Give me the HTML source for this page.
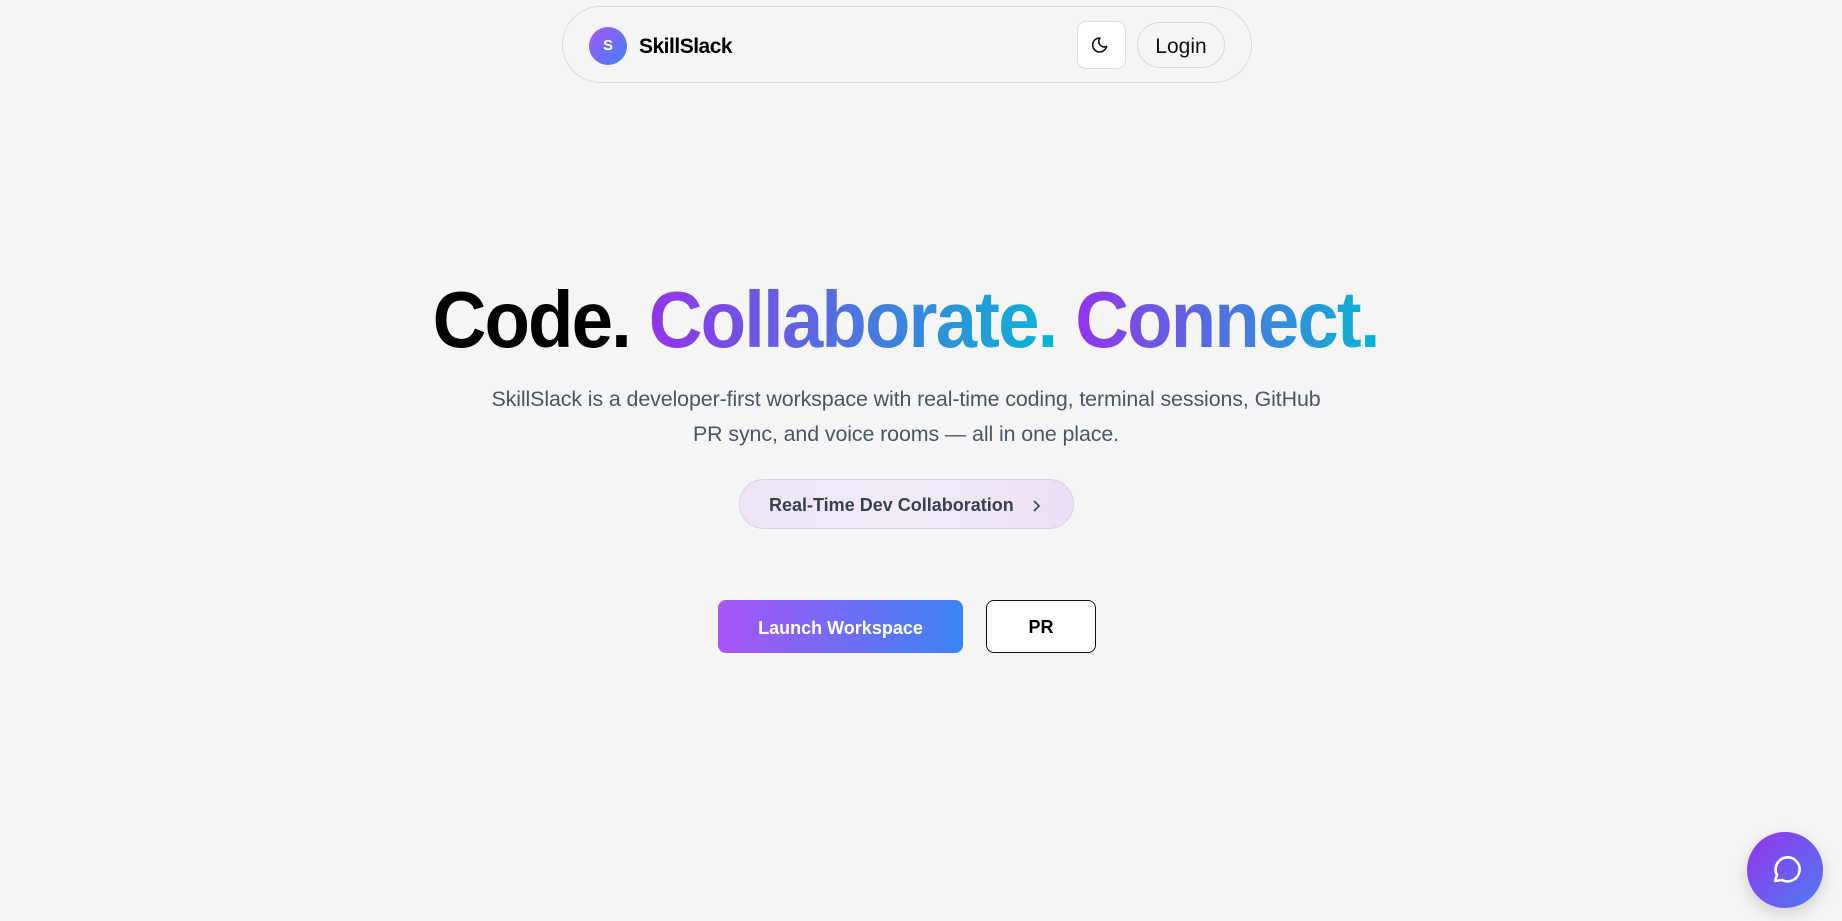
<!DOCTYPE html>
<html><head><meta charset="utf-8"><style>
*{box-sizing:border-box;margin:0;padding:0}
html,body{width:1842px;height:921px;overflow:hidden;background:#f5f5f5;font-family:"Liberation Sans",sans-serif;position:relative}
.nav{position:absolute;left:562px;top:6px;width:690px;height:77px;border:1px solid #d9d9d9;border-radius:40px;background:#f5f5f5}
.logo{position:absolute;left:26px;top:20px;width:38px;height:38px;border-radius:50%;background:linear-gradient(135deg,#a855f7,#3b82f6);color:#fff;font-weight:bold;font-size:15px;text-align:center;line-height:38px}
.brand{position:absolute;left:76px;top:28px;font-weight:bold;font-size:21px;color:#000;letter-spacing:-0.5px}
.moon{position:absolute;left:514px;top:14px;width:49px;height:48px;border:1px solid #ddd;border-radius:9px;background:#fff}
.login{position:absolute;left:574px;top:15px;width:88px;height:46px;border:1px solid #d9d9d9;border-radius:23px;font-size:21px;text-align:center;line-height:48px;color:#111}
h1{position:absolute;left:0;width:1812px;top:270px;text-align:center;font-size:80px;font-weight:bold;line-height:100px;white-space:nowrap}
h1 span.w{display:inline-block;transform:scaleX(0.93);transform-origin:center;letter-spacing:-2px}
.g{background:linear-gradient(90deg,#9333ea,#06b6d4);-webkit-background-clip:text;background-clip:text;color:transparent}
p.d{position:absolute;left:0;width:1812px;top:382px;text-align:center;font-size:21.4px;line-height:35px;color:#4b5563;letter-spacing:-0.1px}
.pill{position:absolute;left:739px;top:479px;width:335px;height:50px;border:1px solid #dccfe8;border-radius:25px;background:linear-gradient(90deg,#ede4f5,#f1eaf6,#ece0f4);font-size:18px;font-weight:bold;color:#374151;line-height:50px;padding-left:29px}
.pill svg{position:absolute;right:32px;top:19px}
.b1{position:absolute;left:718px;top:600px;width:245px;height:53px;border-radius:8px;background:linear-gradient(90deg,#a855f7,#3b82f6);color:#fff;font-weight:bold;font-size:18px;text-align:center;line-height:56px}
.b2{position:absolute;left:986px;top:600px;width:110px;height:53px;border-radius:8px;border:1.5px solid #111;background:#fff;color:#000;font-weight:bold;font-size:18px;text-align:center;line-height:53px}
.chat{position:absolute;left:1747px;top:832px;width:76px;height:76px;border-radius:50%;background:linear-gradient(135deg,#9333ea,#4f7bf7);box-shadow:0 6px 16px rgba(0,0,0,.15)}
</style></head><body>
<div class="nav">
<div class="logo">S</div><div class="brand">SkillSlack</div>
<div class="moon"><svg width="49" height="46" viewBox="0 0 49 46"><path d="M28.5 24.5A7 7 0 1 1 22 16a5.5 5.5 0 0 0 6.5 8.5z" fill="none" stroke="#111" stroke-width="1.6" stroke-linejoin="round"/></svg></div>
<div class="login">Login</div>
</div>
<h1><span class="w">Code. <span class="g">Collaborate.</span> <span class="g">Connect.</span></span></h1>
<p class="d">SkillSlack is a developer-first workspace with real-time coding, terminal sessions, GitHub<br>PR sync, and voice rooms — all in one place.</p>
<div class="pill">Real-Time Dev Collaboration<svg width="10" height="14" viewBox="0 0 10 14"><path d="M3 2l5 5-5 5" fill="none" stroke="#374151" stroke-width="1.6"/></svg></div>
<div class="b1">Launch Workspace</div>
<div class="b2">PR</div>
<div class="chat"><svg width="76" height="76" viewBox="0 0 76 76"><path d="M28 49l2-6a12 12 0 1 1 5 5z" fill="none" stroke="#fff" stroke-width="2.6" stroke-linejoin="round"/></svg></div>
</body></html>
